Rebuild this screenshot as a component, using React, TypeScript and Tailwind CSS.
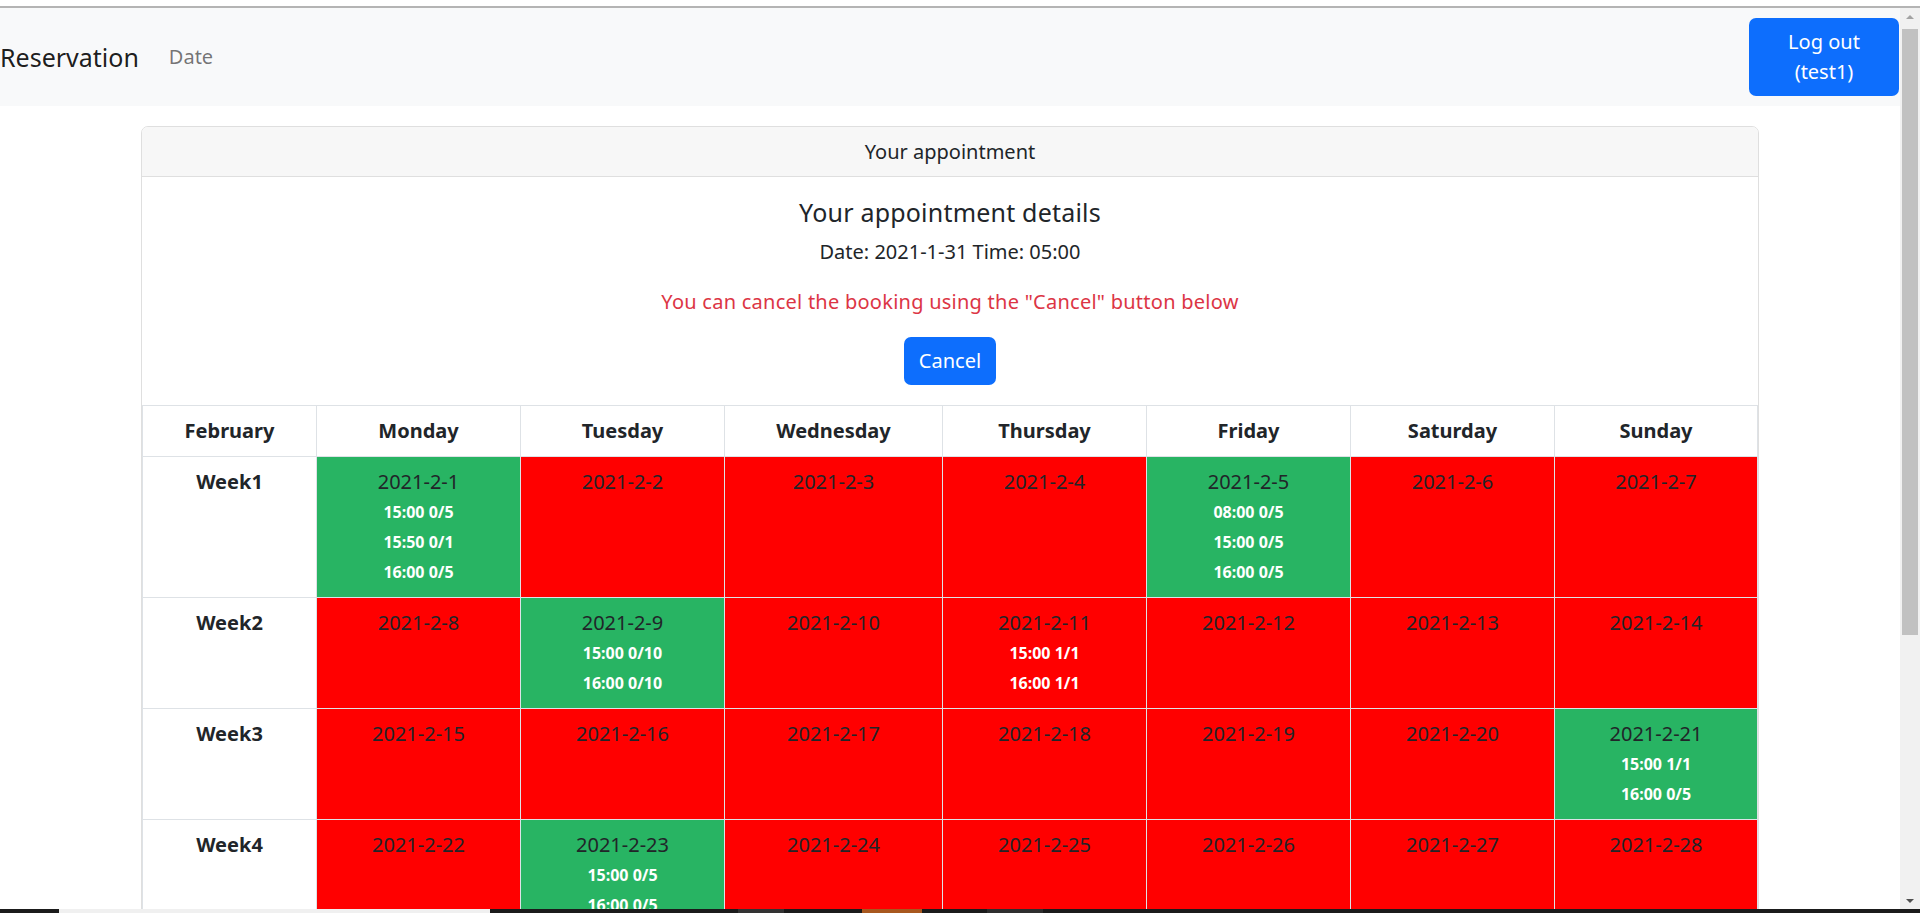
type Day = { date: string; open: boolean; slots?: string[] }

const weeks: { name: string; days: Day[] }[] = [
  {
    name: 'Week1',
    days: [
      { date: '2021-2-1', open: true, slots: ['15:00 0/5', '15:50 0/1', '16:00 0/5'] },
      { date: '2021-2-2', open: false },
      { date: '2021-2-3', open: false },
      { date: '2021-2-4', open: false },
      { date: '2021-2-5', open: true, slots: ['08:00 0/5', '15:00 0/5', '16:00 0/5'] },
      { date: '2021-2-6', open: false },
      { date: '2021-2-7', open: false },
    ],
  },
  {
    name: 'Week2',
    days: [
      { date: '2021-2-8', open: false },
      { date: '2021-2-9', open: true, slots: ['15:00 0/10', '16:00 0/10'] },
      { date: '2021-2-10', open: false },
      { date: '2021-2-11', open: false, slots: ['15:00 1/1', '16:00 1/1'] },
      { date: '2021-2-12', open: false },
      { date: '2021-2-13', open: false },
      { date: '2021-2-14', open: false },
    ],
  },
  {
    name: 'Week3',
    days: [
      { date: '2021-2-15', open: false },
      { date: '2021-2-16', open: false },
      { date: '2021-2-17', open: false },
      { date: '2021-2-18', open: false },
      { date: '2021-2-19', open: false },
      { date: '2021-2-20', open: false },
      { date: '2021-2-21', open: true, slots: ['15:00 1/1', '16:00 0/5'] },
    ],
  },
  {
    name: 'Week4',
    days: [
      { date: '2021-2-22', open: false },
      { date: '2021-2-23', open: true, slots: ['15:00 0/5', '16:00 0/5'] },
      { date: '2021-2-24', open: false },
      { date: '2021-2-25', open: false },
      { date: '2021-2-26', open: false },
      { date: '2021-2-27', open: false },
      { date: '2021-2-28', open: false },
    ],
  },
]

const dayNames = ['Monday', 'Tuesday', 'Wednesday', 'Thursday', 'Friday', 'Saturday', 'Sunday']

function Scrollbar() {
  return (
    <div className="w-[20px] bg-[#f1f1f1] flex flex-col">
      <div className="h-[17px] flex items-center justify-center">
        <div className="w-0 h-0 border-x-[4px] border-x-transparent border-b-[4px] border-b-[#a3a3a3]" />
      </div>
      <div className="mt-[4px] h-[606px] mx-[2px] bg-[#c1c1c1]" />
      <div className="flex-1" />
      <div className="h-[17px] flex items-center justify-center">
        <div className="w-0 h-0 border-x-[4px] border-x-transparent border-t-[4px] border-t-[#505050]" />
      </div>
    </div>
  )
}

export default function App() {
  return (
    <div className="w-[1920px] h-[913px] overflow-hidden flex flex-col bg-white text-[#212529] font-['Noto_Sans','Liberation_Sans',sans-serif]">
      <div className="h-[6px] bg-white" />
      <div className="h-[2px] bg-[#b4b4b4]" />
      <div className="flex flex-1 min-h-0">
        <div className="flex-1 min-w-0 overflow-hidden">
          <nav className="h-[98px] bg-[#f8f9fa] flex items-center justify-between">
            <div className="flex items-center">
              <span className="text-[25px] leading-[38px] text-[#000000e6]">Reservation</span>
              <a href="#" className="ml-[20px] px-[10px] text-[20px] leading-[30px] text-[#0000008c]">Date</a>
            </div>
            <button className="mr-[1px] w-[150px] h-[78px] rounded-[7px] bg-[#0d6efd] text-white text-[20px] leading-[30px]">
              Log out
              <br />
              (test1)
            </button>
          </nav>

          <div className="mt-[20px] mx-auto w-[1618px] border border-[#dfdfdf] rounded-[7px] overflow-hidden">
            <div className="h-[50px] bg-[#f7f7f7] border-b border-[#dfdfdf] flex items-center justify-center text-[20px]">
              Your appointment
            </div>
            <div className="p-[20px] text-center">
              <h5 className="text-[25px] leading-[30px] mb-[10px] tracking-[0.2px]">Your appointment details</h5>
              <p className="text-[20px] leading-[30px] mb-[20px]">Date: 2021-1-31 Time: 05:00</p>
              <p className="text-[20px] leading-[30px] mb-[20px] text-[#dc3545] tracking-[0.25px]">
                You can cancel the booking using the "Cancel" button below
              </p>
              <button className="h-[48px] px-[15px] rounded-[7px] bg-[#0d6efd] text-white text-[20px] leading-[30px]">
                Cancel
              </button>
            </div>
            <table className="w-full table-fixed border-collapse">
              <colgroup>
                <col className="w-[174px]" />
                <col className="w-[204px]" />
                <col className="w-[204px]" />
                <col className="w-[218px]" />
                <col className="w-[204px]" />
                <col className="w-[204px]" />
                <col className="w-[204px]" />
                <col />
              </colgroup>
              <thead>
                <tr>
                  <th className="border border-[#dee2e6] p-[10px] text-[20px] leading-[30px] font-bold">February</th>
                  {dayNames.map((d) => (
                    <th key={d} className="border border-[#dee2e6] p-[10px] text-[20px] leading-[30px] font-bold">
                      {d}
                    </th>
                  ))}
                </tr>
              </thead>
              <tbody>
                {weeks.map((w) => (
                  <tr key={w.name}>
                    <td className="border border-[#dee2e6] p-[10px] align-top text-center text-[20px] leading-[30px] font-bold">
                      {w.name}
                    </td>
                    {w.days.map((d) => (
                      <td
                        key={d.date}
                        className={
                          'border border-[#dee2e6] p-[10px] align-top text-center ' +
                          (d.open ? 'bg-[#28b463]' : 'bg-[#ff0000]')
                        }
                      >
                        <div className="text-[20px] leading-[30px] text-[#212529]">{d.date}</div>
                        {d.slots?.map((s) => (
                          <div key={s} className="text-[16px] leading-[30px] font-bold text-white">
                            {s}
                          </div>
                        ))}
                      </td>
                    ))}
                  </tr>
                ))}
              </tbody>
            </table>
          </div>
        </div>
        <Scrollbar />
      </div>
      <div className="h-[4px] flex">
        <div className="w-[59px] bg-[#1b1b1b]" />
        <div className="w-[431px] bg-[#f0f0f0]" />
        <div className="w-[248px] bg-[#1b1b1b]" />
        <div className="w-[46px] bg-[#333333]" />
        <div className="w-[78px] bg-[#1b1b1b]" />
        <div className="w-[60px] bg-[#a8581f]" />
        <div className="w-[65px] bg-[#1b1b1b]" />
        <div className="w-[56px] bg-[#2e2e2e]" />
        <div className="flex-1 bg-[#1b1b1b]" />
      </div>
    </div>
  )
}
